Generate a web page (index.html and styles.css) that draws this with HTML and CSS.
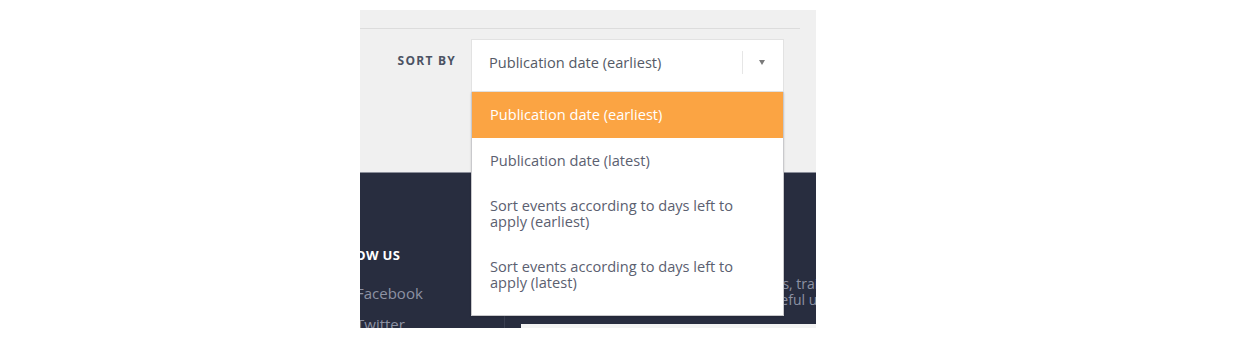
FILE: index.html
```html
<!DOCTYPE html>
<html>
<head>
<meta charset="utf-8">
<link rel="stylesheet" href="styles.css">
</head>
<body>
<div class="frame">
  <section class="top">
    <div class="rule"></div>
    <div class="sort-row">
      <span class="sort-label">SORT BY</span>
      <div class="select-wrap">
        <div class="select">
          <span class="select-value">Publication date (earliest)</span>
          <span class="select-sep"></span>
          <span class="select-arrow"></span>
        </div>
        <ul class="menu">
          <li class="menu-item active">Publication date (earliest)</li>
          <li class="menu-item">Publication date (latest)</li>
          <li class="menu-item">Sort events according to days left to apply (earliest)</li>
          <li class="menu-item">Sort events according to days left to apply (latest)</li>
        </ul>
      </div>
    </div>
  </section>
  <footer class="footer">
    <div class="follow">
      <h4 class="follow-title">FOLLOW US</h4>
      <a class="follow-link">Facebook</a>
      <a class="follow-link">Twitter</a>
    </div>
    <div class="news">
      <p class="news-text">Read news about incoming opportunities, trainings<br>and other things that would be really useful updates</p>
      <div class="news-input"></div>
    </div>
  </footer>
</div>
</body>
</html>
```

FILE: styles.css
```css
* { box-sizing: border-box; }
html, body { margin: 0; padding: 0; background: #ffffff; }
body { font-family: "Open Sans", "Noto Sans", sans-serif; }

.frame {
  margin: 10px 0 0 360px;
  width: 456px;
  height: 318px;
  overflow: hidden;
  position: relative;
  background: #f0f0f0;
}

.top {
  height: 162px;
  background: #f0f0f0;
  padding-right: 16px;
}
.rule {
  height: 19px;
  border-bottom: 1px solid #dcdcdc;
}
.sort-row {
  display: flex;
  align-items: flex-start;
  margin-top: 10px;
}
.sort-label {
  width: 96px;
  text-align: right;
  margin-right: 15px;
  padding-top: 13px;
  font-size: 12px;
  font-weight: 700;
  letter-spacing: 1.25px;
  color: #4b5263;
}
.select-wrap {
  position: relative;
  width: 313px;
}
.select {
  height: 53px;
  background: #fff;
  border: 1px solid #e2e2e2;
  display: flex;
  align-items: center;
  padding-left: 17px;
}
.select-value {
  flex: 1;
  font-size: 14.6px;
  color: #555a66;
  padding-bottom: 8px;
}
.select-sep {
  width: 1px;
  height: 23px;
  background: #e6e6e6;
  margin-bottom: 6px;
}
.select-arrow {
  width: 0;
  height: 0;
  border-left: 3.5px solid transparent;
  border-right: 3.5px solid transparent;
  border-top: 5px solid #7a7a7a;
  margin: 0 18px 6px 16px;
}
.menu {
  position: absolute;
  top: 53px;
  left: 0;
  width: 313px;
  margin: 0;
  padding: 0 0 10px;
  list-style: none;
  background: #fff;
  border: 1px solid #c9c9cc;
  border-top: none;
  box-shadow: 0 1px 2px rgba(0,0,0,0.15);
  z-index: 2;
}
.menu-item {
  padding: 15px 40px 15px 18px;
  font-size: 14.6px;
  line-height: 15.5px;
  color: #5b6070;
}
.menu-item.active {
  background: #fba443;
  color: #fff;
}

.footer {
  height: 156px;
  background: #282d3f;
  border-top: 1px solid #8b8e9a;
  display: flex;
}
.follow {
  width: 183px;
  flex: none;
  margin-left: -38px;
  padding-top: 73px;
  border-right: 1px solid #3a3f51;
}
.follow-title {
  margin: 0 0 14px;
  font-size: 13px;
  font-weight: 700;
  color: #ffffff;
  line-height: 18px;
  letter-spacing: 0.3px;
}
.follow-link {
  display: block;
  font-size: 15px;
  line-height: 31px;
  color: #8d92a3;
  margin-left: 34px;
}
.news {
  flex: 1;
  min-width: 0;
  padding: 103px 0 0 16px;
}
.news-text {
  margin: 0;
  white-space: nowrap;
  font-size: 14px;
  line-height: 16px;
  color: #8d92a3;
}
.news-input {
  margin-top: 16px;
  height: 4px;
  background: #f3f3f3;
}
```
